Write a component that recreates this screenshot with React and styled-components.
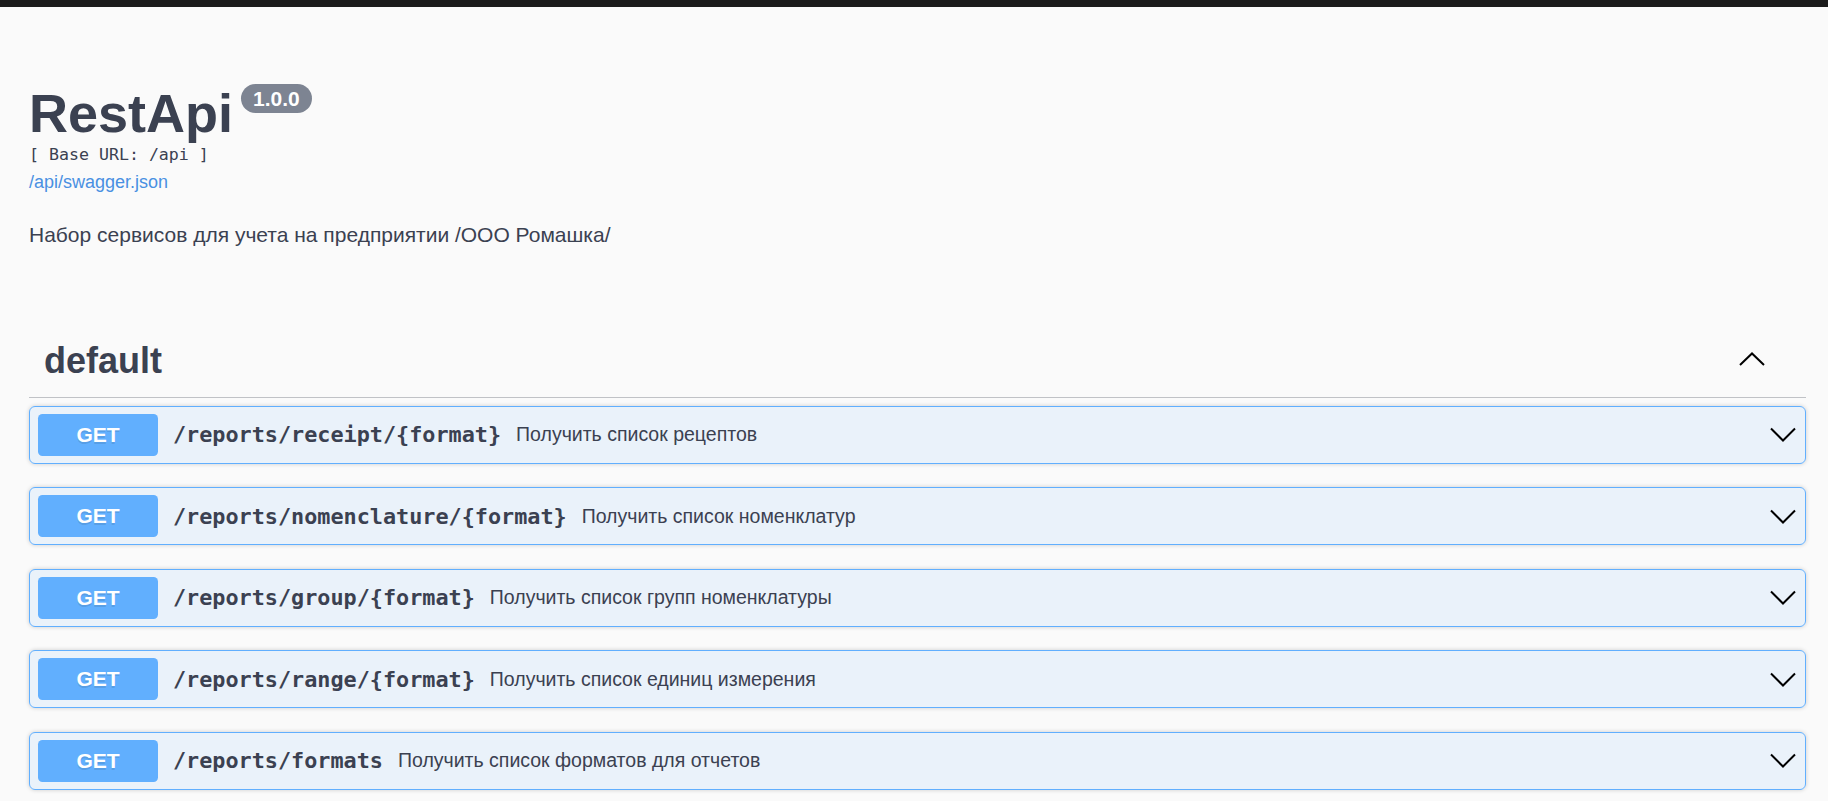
import React from "react";
import styled, { createGlobalStyle } from "styled-components";

const GlobalStyle = createGlobalStyle`
  html, body {
    margin: 0;
    padding: 0;
    background: #fafafa;
  }
  body {
    font-family: "Liberation Sans", Arial, sans-serif;
    color: #3b4151;
  }
  * { box-sizing: border-box; }
`;

const TopBar = styled.div`
  height: 7px;
  background: #1b1b1b;
`;

const Wrapper = styled.div`
  padding: 0 22px 0 29px;
`;

const Info = styled.section`
  margin-top: 75px;
  display: flex;
  flex-direction: column;
  align-items: flex-start;
`;

const TitleRow = styled.h2`
  display: flex;
  align-items: flex-start;
  gap: 8px;
  margin: 0;
  font-size: 54px;
  line-height: 62px;
  font-weight: 700;
  color: #3b4151;
`;

const VersionBadge = styled.span`
  margin-top: 2px;
  padding: 3px 12px;
  border-radius: 57px;
  background: #7d8492;
  color: #fff;
  font-size: 21px;
  line-height: 23px;
  font-weight: 700;
`;

const BaseUrl = styled.pre`
  margin: 1px 0 0;
  font-family: "DejaVu Sans Mono", "Liberation Mono", monospace;
  font-size: 16.6px;
  line-height: 20px;
  color: #3b4151;
`;

const SpecLink = styled.a`
  display: block;
  margin-top: 6px;
  font-size: 18px;
  line-height: 22px;
  color: #4990e2;
  text-decoration: none;
`;

const Description = styled.p`
  margin: 30px 0 0;
  font-size: 21px;
  line-height: 24px;
  color: #3b4151;
`;

const TagSection = styled.section`
  margin-top: 78px;
`;

const TagHeader = styled.div`
  display: flex;
  align-items: center;
  justify-content: space-between;
  padding: 15px 41px 15px 15px;
  border-bottom: 1px solid rgba(59, 65, 81, 0.3);
`;

const TagName = styled.h3`
  margin: 0;
  font-size: 36px;
  line-height: 42px;
  font-weight: 700;
  color: #3b4151;
`;

const Chevron = styled.svg`
  display: block;
  flex: none;
  margin-top: ${(p) => p.$shift || 0}px;
`;

const OpList = styled.div`
  margin-top: 7.5px;
`;

const OpBlock = styled.div`
  display: flex;
  align-items: center;
  height: 58px;
  margin-bottom: 23.5px;
  padding: 7px 9px 7px 8px;
  border: 1px solid #61affe;
  border-radius: 6px;
  background: rgba(97, 175, 254, 0.1);
  box-shadow: 0 0 4px rgba(0, 0, 0, 0.19);
`;

const Method = styled.span`
  flex: none;
  width: 120px;
  height: 42px;
  border-radius: 4.5px;
  background: #61affe;
  color: #fff;
  font-size: 21px;
  line-height: 42px;
  font-weight: 700;
  text-align: center;
  text-shadow: 0 1.5px 0 rgba(0, 0, 0, 0.1);
`;

const Path = styled.span`
  padding: 0 15px;
  font-family: "DejaVu Sans Mono", "Liberation Mono", monospace;
  font-size: 21.8px;
  font-weight: 700;
  color: #3b4151;
  white-space: nowrap;
`;

const Summary = styled.span`
  flex: 1;
  font-size: 19.5px;
  color: #3b4151;
  white-space: nowrap;
`;

const ChevronDown = () => (
  <Chevron width="26" height="15" viewBox="0 0 26 15">
    <polyline points="1,1.5 13,13.5 25,1.5" fill="none" stroke="#000" strokeWidth="2" />
  </Chevron>
);

const ChevronUp = () => (
  <Chevron width="26" height="14" viewBox="0 0 26 14" $shift={-4}>
    <polyline points="1,13 13,1.5 25,13" fill="none" stroke="#000" strokeWidth="2" />
  </Chevron>
);

const operations = [
  { path: "/reports/receipt/{format}", summary: "Получить список рецептов" },
  { path: "/reports/nomenclature/{format}", summary: "Получить список номенклатур" },
  { path: "/reports/group/{format}", summary: "Получить список групп номенклатуры" },
  { path: "/reports/range/{format}", summary: "Получить список единиц измерения" },
  { path: "/reports/formats", summary: "Получить список форматов для отчетов" },
];

export default function App() {
  return (
    <>
      <GlobalStyle />
      <TopBar />
      <Wrapper>
        <Info>
          <TitleRow>
            RestApi
            <VersionBadge>1.0.0</VersionBadge>
          </TitleRow>
          <BaseUrl>[ Base URL: /api ]</BaseUrl>
          <SpecLink href="#">/api/swagger.json</SpecLink>
          <Description>Набор сервисов для учета на предприятии /ООО Ромашка/</Description>
        </Info>
        <TagSection>
          <TagHeader>
            <TagName>default</TagName>
            <ChevronUp />
          </TagHeader>
          <OpList>
            {operations.map((op) => (
              <OpBlock key={op.path}>
                <Method>GET</Method>
                <Path>{op.path}</Path>
                <Summary>{op.summary}</Summary>
                <ChevronDown />
              </OpBlock>
            ))}
          </OpList>
        </TagSection>
      </Wrapper>
    </>
  );
}
